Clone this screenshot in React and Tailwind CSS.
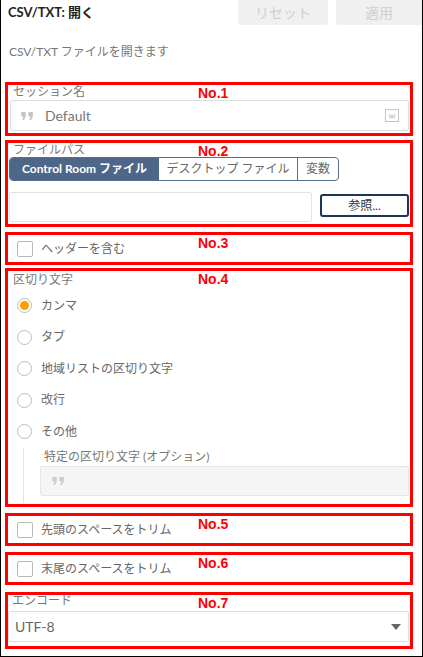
import { ChevronDown } from "lucide-react";

const FONT = { fontFamily: "Lato, 'Noto Sans CJK JP', sans-serif" };

function QuoteIcon({ className }) {
  return (
    <svg viewBox="0 0 14 9" className={className} fill="currentColor">
      <path d="M0 0h5v5L3 9H1l1.5-4H0z" />
      <path d="M8 0h5v5l-2 4H9l1.5-4H8z" />
    </svg>
  );
}

function Box({ no, className, children }) {
  return (
    <div className={`relative ml-[4px] w-[408px] border-[3px] border-[#ff0000] ${className}`}>
      <span className="absolute left-[190px] top-[1px] text-[14px] font-bold leading-[14px] text-[#ff0000]" style={{ fontFamily: "'Liberation Sans', Arial, sans-serif" }}>
        {no}
      </span>
      {children}
    </div>
  );
}

function Checkbox({ label }) {
  return (
    <div className="flex h-full items-center pl-[9px]">
      <span className="h-[16px] w-[16px] rounded-[2px] border border-[#b8b8b8] bg-white" />
      <span className="ml-[8px] text-[12px] text-[#666]">{label}</span>
    </div>
  );
}

function Radio({ label, checked }) {
  return (
    <div className="flex h-[31.5px] items-center pl-[9px]">
      <span className="flex h-[15px] w-[15px] items-center justify-center rounded-full border border-[#bdbdbd] bg-white">
        {checked && <span className="h-[9px] w-[9px] rounded-full bg-[#ff9f00]" />}
      </span>
      <span className="ml-[9px] text-[12px] text-[#666]">{label}</span>
    </div>
  );
}

export default function App() {
  return (
    <div className="h-[657px] w-[423px] overflow-hidden border-x border-b border-black bg-white" style={FONT}>
      <div className="flex h-[25px] items-center">
        <h1 className="pl-[7px] text-[13px] font-bold text-[#222]">CSV/TXT: 開く</h1>
        <div className="ml-auto flex h-full items-stretch gap-[8px]">
          <button className="w-[90px] rounded-b-[3px] bg-[#f0f0f0] text-[14px] text-[#cfcfcf]">リセット</button>
          <button className="w-[86px] rounded-bl-[3px] bg-[#f0f0f0] text-[14px] text-[#cfcfcf]">適用</button>
        </div>
      </div>

      <p className="mt-[19px] h-[16px] pl-[8px] text-[12px] leading-[16px] text-[#777]">CSV/TXT ファイルを開きます</p>

      <Box no="No.1" className="mt-[22px] h-[54px]">
        <div className="pl-[5px] text-[12px] leading-[14px] text-[#777]">セッション名</div>
        <div className="ml-[2px] mt-[1px] flex h-[31px] w-[399px] items-center rounded-[2px] border border-[#dedede] pl-[10px] pr-[9px]">
          <QuoteIcon className="h-[8px] w-[13px] text-[#c4c4c4]" />
          <span className="ml-[11px] text-[14px] text-[#777]">Default</span>
          <span className="ml-auto flex h-[13px] w-[14px] items-center justify-center border border-[#c4c4c4] text-[6px] leading-none text-[#999]">(x)</span>
        </div>
      </Box>

      <Box no="No.2" className="mt-[4px] h-[87px]">
        <div className="-mt-[1px] h-[15px] pl-[5px] text-[12px] leading-[15px] text-[#777]">ファイルパス</div>
        <div className="ml-[1px] flex h-[24px] w-[330px] overflow-hidden rounded-[4px] border border-[#55708f] text-[12px]">
          <span className="flex w-[149px] items-center justify-center bg-[#4e6688] font-bold text-white">Control Room ファイル</span>
          <span className="flex w-[139px] items-center justify-center border-r border-[#55708f] text-[#666]">デスクトップ ファイル</span>
          <span className="flex flex-1 items-center justify-center text-[#666]">変数</span>
        </div>
        <div className="ml-[1px] mt-[11px] flex items-start">
          <div className="h-[30px] w-[303px] rounded-[2px] border border-[#e2e2e2]" />
          <button className="ml-[8px] mt-[2px] h-[23px] w-[89px] rounded-[3px] border-2 border-[#1e3656] text-[12px] text-[#333]">参照...</button>
        </div>
      </Box>

      <Box no="No.3" className="mt-[5px] h-[33px]">
        <Checkbox label="ヘッダーを含む" />
      </Box>

      <Box no="No.4" className="mt-[3px] h-[239px]">
        <div className="mt-[2px] h-[14px] pl-[5px] text-[12px] leading-[14px] text-[#777]">区切り文字</div>
        <div className="mt-[3px]">
          <Radio label="カンマ" checked />
          <Radio label="タブ" />
          <Radio label="地域リストの区切り文字" />
          <Radio label="改行" />
          <Radio label="その他" />
        </div>
        <div className="ml-[15px] border-l border-[#e2e2e2] pb-[7px] pl-[16px]">
          <div className="pt-[2px] pl-[4px] text-[12px] leading-[14px] text-[#777]">特定の区切り文字 (オプション)</div>
          <div className="mt-[2px] flex h-[30px] w-[369px] items-center rounded-[2px] border border-[#e6e6e6] bg-[#f5f5f5] pl-[11px]">
            <QuoteIcon className="h-[8px] w-[13px] text-[#cdcdcd]" />
          </div>
        </div>
      </Box>

      <Box no="No.5" className="mt-[6px] h-[33px]">
        <Checkbox label="先頭のスペースをトリム" />
      </Box>

      <Box no="No.6" className="mt-[6px] h-[33px]">
        <Checkbox label="末尾のスペースをトリム" />
      </Box>

      <Box no="No.7" className="mt-[7px] h-[57px]">
        <div className="h-[12px] pl-[4px] text-[12px] leading-[12px] text-[#777]">エンコード</div>
        <div className="mt-[4px] flex h-[31px] w-[401px] items-center rounded-[2px] border border-[#dcdcdc] pl-[6px] pr-[7px]">
          <span className="text-[14px] text-[#666]">UTF-8</span>
          <svg viewBox="0 0 10 6" className="ml-auto h-[6px] w-[10px] text-[#666]" fill="currentColor">
            <path d="M0 0h10L5 6z" />
          </svg>
        </div>
      </Box>
    </div>
  );
}
